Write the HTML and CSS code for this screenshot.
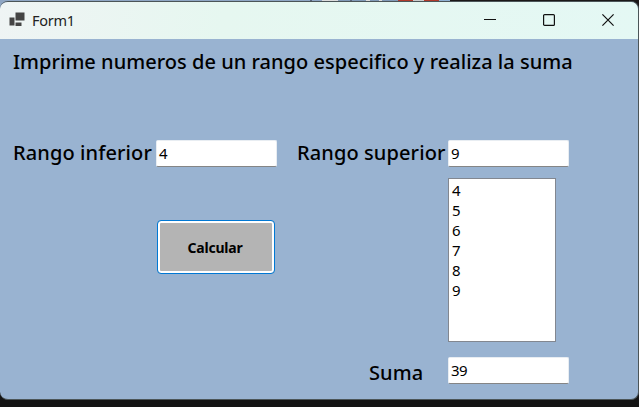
FILE: index.html
```html
<!DOCTYPE html>
<html lang="es">
<head>
<meta charset="utf-8">
<title>Form1</title>
<link rel="stylesheet" href="styles.css">
</head>
<body>
<div class="backdrop"></div>
<main class="window">
  <header class="titlebar">
    <svg class="app-icon" width="16" height="15" viewBox="0 0 16 15" fill="#444"><path d="M6.5.5h9v8h-9z"/><path d="M.5 5.5h5v8h-5zM6.500 10.500h6v3.500h-6z"/></svg>
    <span class="caption">Form1</span>
    <div class="controls">
      <svg width="12" height="12" viewBox="0 0 12 12"><path d="M0 5.500h12"/></svg>
      <svg width="12" height="12" viewBox="0 0 12 12"><rect x=".6" y=".6" width="10.800" height="10.800" rx="1"/></svg>
      <svg width="12" height="12" viewBox="0 0 12 12"><path d="M.4.4l11.200 11.200M11.600.4L.4 11.600"/></svg>
    </div>
  </header>
  <form class="form">
    <h1 class="heading"><span>Imprime numeros de un rango especifico y realiza la suma</span></h1>
    <label class="label lower">Rango inferior</label>
    <div class="field">4</div>
    <label class="label upper">Rango superior</label>
    <div class="field">9</div>
    <button class="button" type="button">Calcular</button>
    <ul class="list"><li>4</li><li>5</li><li>6</li><li>7</li><li>8</li><li>9</li></ul>
    <label class="label sum">Suma</label>
    <div class="field total">39</div>
  </form>
</main>
</body>
</html>
```
FILE: styles.css
```css
* { box-sizing: border-box; }
body {
  margin: 0;
  width: 639px;
  height: 407px;
  overflow: hidden;
  background: #141414;
  font-family: "Noto Sans", "Open Sans", sans-serif;
  color: #000;
}
.backdrop {
  height: 10px;
  margin-bottom: -9px;
  background: linear-gradient(90deg, #8fa6c4 0 310px, #566179 310px 312px, #8fa6c4 312px 322px, #ddd 322px 338px, #8099b7 338px 350px, #59647a 350px 352px, #8099b7 352px 366px, #ddd 366px 370px, #8099b7 370px 379px, #ddd 379px 382px, #8099b7 382px 398px, #b03a2c 398px 413px, #ccc 413px 424px, #b03a2c 424px 439px, #8fb0d2 439px 450px, #1b1818 450px);
}
.window {
  position: relative;
  width: 639px;
  height: 399px;
  border: 1px solid #4b5558;
  border-left: 0;
  border-radius: 8px;
  overflow: hidden;
  background: #99b3d1;
}
.titlebar {
  display: flex;
  align-items: center;
  height: 37px;
  padding: 0 24px 0 9px;
  background: linear-gradient(100deg, #eff4f4 0, #e6f7f0 35%, #e4f8f4 100%);
}
.app-icon { margin-top: -2px; }
.caption {
  margin: -2px 0 0 7px;
  font-size: 14.500px;
  letter-spacing: -0.3px;
  line-height: 20px;
  color: #222;
}
.controls {
  display: flex;
  gap: 47px;
  margin: -2px 0 0 auto;
  fill: none;
  stroke: #111;
  stroke-width: 1.2;
}
.form {
  display: grid;
  grid-template-columns: 143px 121px 171px 121px;
  grid-template-rows: 101px 27px 11px 164px 15px 27px;
  padding-left: 13px;
}
.heading, .label {
  margin: 0;
  font-size: 20px;
  font-weight: 500;
  line-height: 27px;
  letter-spacing: 0.1px;
  white-space: nowrap;
}
.heading { grid-column: 1 / -1; padding-top: 9px; letter-spacing: 0.025px; }
.lower, .upper { margin-top: -1px; }
.upper { padding-left: 20px; }
.field {
  height: 27px;
  padding: 0 2px;
  background: #fff;
  border: 1px solid #e8edf2;
  border-bottom-color: #858585;
  border-radius: 2px;
  font-size: 15px;
  letter-spacing: -0.5px;
  line-height: 25px;
}
.button {
  grid-area: 4 / 2;
  width: 118px;
  height: 54px;
  margin: 42px 0 0 1px;
  padding: 1px 2px 0 0;
  border: 1px solid #0078d4;
  border-radius: 4px;
  background: #b4b4b4;
  box-shadow: inset 0 0 0 2px #fff;
  font: 700 14px/20px "Noto Sans", sans-serif;
  letter-spacing: -0.2px;
  color: #000;
}
.list {
  grid-area: 4 / 4;
  width: 108px;
  height: 164px;
  margin: 0;
  padding: 1px 3px;
  border: 1px solid #828790;
  background: #fff;
  list-style: none;
  font-size: 15px;
  line-height: 20px;
}
.sum { grid-area: 6 / 3; padding: 2px 0 0 92px; }
.total { grid-area: 6 / 4; }
```
